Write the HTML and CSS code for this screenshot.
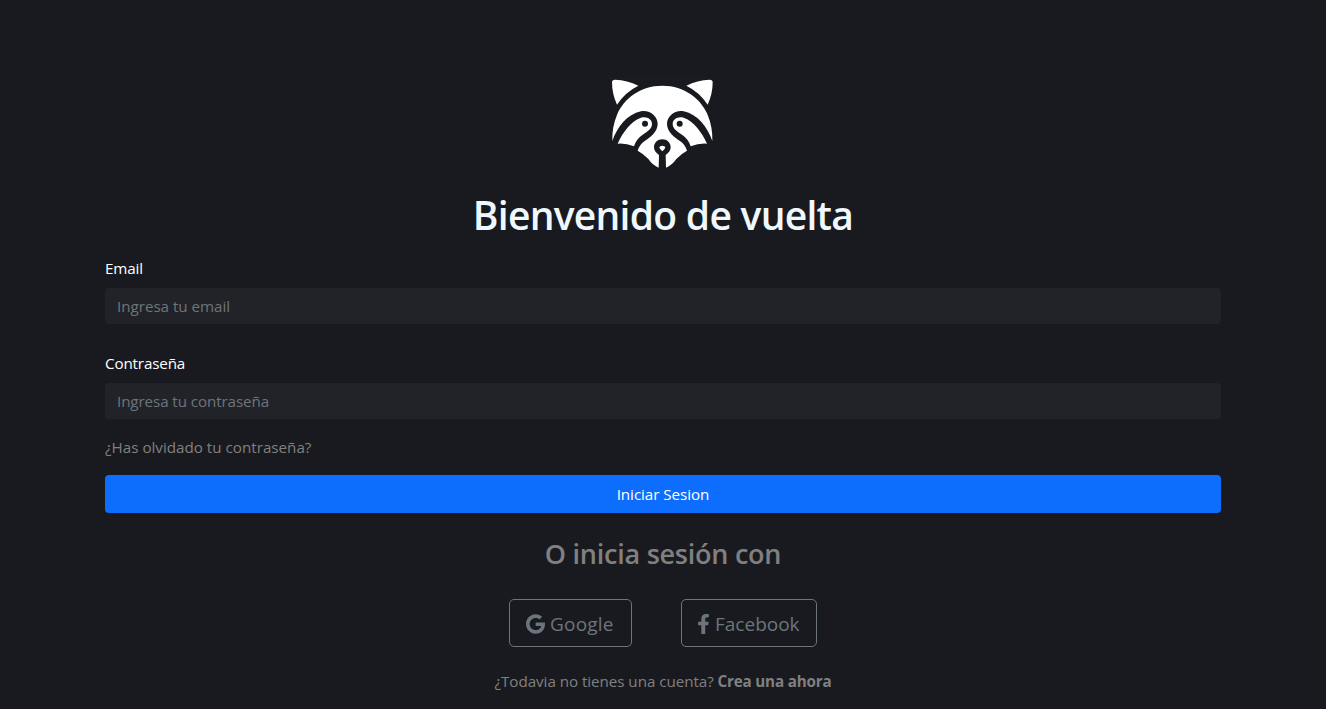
FILE: index.html
```html
<!DOCTYPE html>
<html lang="es">
<head>
<meta charset="utf-8">
<title>Iniciar Sesion</title>
<link rel="stylesheet" href="styles.css">
</head>
<body>
<main class="login">
  <svg class="logo" viewBox="0 0 360 315" aria-hidden="true">
    <path class="halo" d="M15 25H322"/>
    <path class="fur" d="M30 37Q30 29 39 29Q76 30 109 47Q70 66 45 104Q30 72 30 37Z"/>
    <path class="fur" d="M332 37Q332 29 323 29Q286 30 253 47Q292 66 317 104Q332 72 332 37Z"/>
    <path class="fur" d="M181 47C114 47 66 87 46 132C34 160 30 187 31 213C45 172 75 133 117 124C143 119 168 139 167 163C166 187 145 202 127 214Q113 224 107 242Q124 251 139 267Q153 287 170 293L171 255C162 249 156 241 156 232C156 218 167 208 181 208C195 208 206 218 206 232C206 241 200 249 191 255L192 293Q209 287 223 267Q238 251 255 242Q249 224 235 214C217 202 196 187 195 163C194 139 219 119 245 124C287 133 317 172 331 213C332 187 328 160 316 132C296 87 248 47 181 47Z"/>
    <path class="fur" d="M47 221C63 185 88 153 117 143C134 138 150 147 150 162C150 177 136 185 121 195Q103 207 96 229Q71 219 47 221Z"/>
    <path class="fur" d="M315 221C299 185 274 153 245 143C228 138 212 147 212 162C212 177 226 185 241 195Q259 207 266 229Q291 219 315 221Z"/>
    <circle class="eye" cx="129" cy="161" r="9"/>
    <circle class="eye" cx="233" cy="161" r="9"/>
    <path class="fur" d="M172 232Q173 227 181 227Q189 227 190 232Q189 239 181 244Q173 239 172 232Z"/>
  </svg>
  <h1 class="title">Bienvenido de vuelta</h1>
  <form class="form">
    <label class="label" for="email">Email</label>
    <input class="input" id="email" type="email" placeholder="Ingresa tu email">
    <label class="label label-password" for="password">Contraseña</label>
    <input class="input input-password" id="password" type="password" placeholder="Ingresa tu contraseña">
    <a class="forgot">¿Has olvidado tu contraseña?</a>
    <button class="submit" type="button">Iniciar Sesion</button>
  </form>
  <h3 class="subtitle">O inicia sesión con</h3>
  <div class="social">
    <button class="provider google" type="button"><svg class="icon-google" viewBox="0 0 488 512"><path d="M488 261.800C488 403.300 391.100 504 248 504 110.800 504 0 393.200 0 256S110.800 8 248 8c66.800 0 123 24.500 166.300 64.900l-67.500 64.900C258.500 52.600 94.300 116.600 94.300 256c0 86.500 69.100 156.600 153.700 156.600 98.200 0 135-70.400 140.800-106.900H248v-85.300h236.100c2.300 12.700 3.900 24.900 3.900 41.400z"/></svg><span>Google</span></button>
    <button class="provider facebook" type="button"><svg class="icon-facebook" viewBox="0 0 320 512"><path d="M279.140 288l14.220-92.660h-88.910v-60.130c0-25.350 12.420-50.060 52.240-50.060h40.420V6.260S260.430 0 225.360 0c-73.220 0-121.080 44.380-121.080 124.720v70.620H22.890V288h81.390v224h100.170V288z"/></svg><span>Facebook</span></button>
  </div>
  <p class="signup"><span class="question">¿Todavia no tienes una cuenta?</span> <b>Crea una ahora</b></p>
</main>
</body>
</html>
```
FILE: styles.css
```css
* { box-sizing: border-box; }
body {
  margin: 0;
  background: #191a1f;
  color: #fff;
  font-family: "Segoe UI", "Open Sans", "Noto Sans", sans-serif;
  font-size: 15.2px;
  line-height: 24px;
  overflow: hidden;
}
.login {
  min-height: 709px;
  padding: 70px 105px 0;
  display: flex;
  flex-direction: column;
  align-items: center;
}
.logo { width: 120px; height: 105px; margin-left: -2px; }
.fur { fill: #fff; }
.eye { fill: #191a1f; }
.halo { stroke: #1d1e22; stroke-width: 3; }
.title {
  margin: 16px 0 0;
  color: #f0f8ff;
  font-size: 39px;
  line-height: 48px;
  font-weight: 600;
  letter-spacing: -0.72px;
}
.form {
  width: 100%;
  margin-top: 17px;
  display: flex;
  flex-direction: column;
}
.label { letter-spacing: -0.15px; }
.label-password { margin-top: 27px; }
.input {
  height: 36px;
  margin: 8px 0 0;
  padding: 0 12px;
  border: 0;
  border-radius: 4px;
  background: #222328;
  color: #fff;
  font: inherit;
  letter-spacing: -0.03px;
}
.input-password { letter-spacing: -0.1px; }
.input::placeholder { color: #6c757d; opacity: 1; }
.forgot { margin-top: 16px; color: #808080; }
.submit {
  height: 38px;
  margin-top: 16px;
  padding: 0;
  border: 0;
  border-radius: 4px;
  background: #0d6efd;
  color: #fff;
  font: inherit;
  letter-spacing: -0.06px;
}
.subtitle {
  margin: 24px 0 0;
  color: #808080;
  font-size: 27px;
  line-height: 34px;
  font-weight: 600;
  letter-spacing: -0.25px;
}
.social { display: flex; gap: 49px; margin-top: 28px; }
.provider {
  display: flex;
  align-items: center;
  height: 48px;
  padding: 2px 15px 0;
  border: 1px solid #6c757d;
  border-radius: 5px;
  background: none;
  color: #6c757d;
  font: inherit;
  font-size: 19px;
}
.google { width: 123px; padding-left: 16px; letter-spacing: 0.2px; }
.facebook { width: 136px; letter-spacing: 0; }
.provider svg { flex: none; height: 20px; margin-top: -1px; fill: currentColor; }
.icon-google { width: 19px; margin-right: 5px; }
.icon-facebook { width: 13px; margin-right: 5px; }
.signup { margin: 22px 0 0; color: #808080; letter-spacing: -0.17px; }
.question { letter-spacing: -0.05px; }
```
